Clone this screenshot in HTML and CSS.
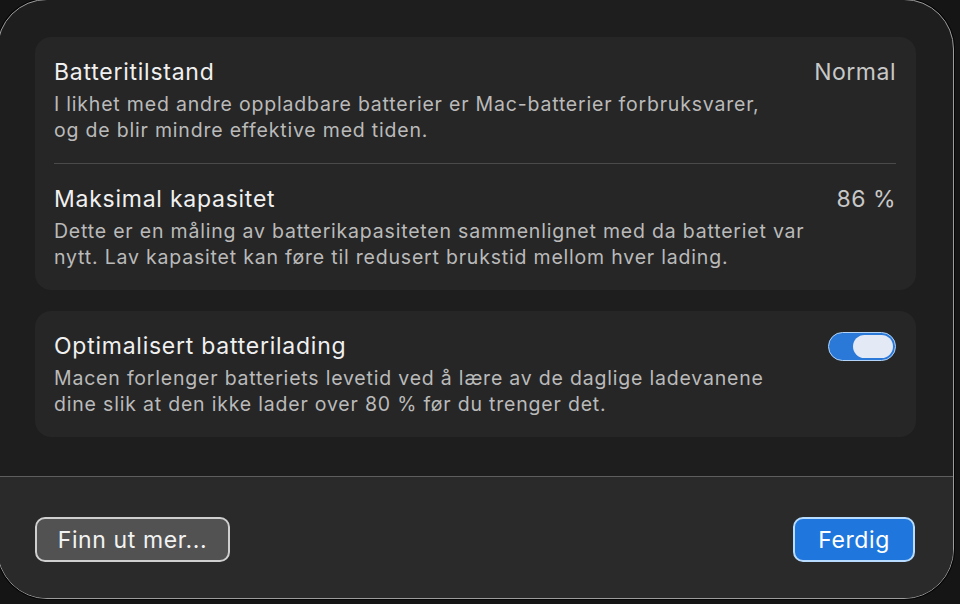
FILE: index.html
```html
<!DOCTYPE html>
<html lang="nb">
<head>
<meta charset="utf-8">
<title>Batteritilstand</title>
<link rel="stylesheet" href="styles.css">
</head>
<body>
<div class="window">
  <div class="content">
    <section class="card">
      <div class="row">
        <div class="row-head">
          <span class="title">Batteritilstand</span>
          <span class="value">Normal</span>
        </div>
        <p class="desc">I likhet med andre oppladbare batterier er Mac-batterier forbruksvarer,<br>og de blir mindre effektive med tiden.</p>
      </div>
      <div class="sep"></div>
      <div class="row">
        <div class="row-head">
          <span class="title">Maksimal kapasitet</span>
          <span class="value">86 %</span>
        </div>
        <p class="desc">Dette er en måling av batterikapasiteten sammenlignet med da batteriet var<br>nytt. Lav kapasitet kan føre til redusert brukstid mellom hver lading.</p>
      </div>
    </section>
    <section class="card">
      <div class="row">
        <div class="row-head">
          <span class="title">Optimalisert batterilading</span>
          <span class="toggle"><span class="knob"></span></span>
        </div>
        <p class="desc">Macen forlenger batteriets levetid ved å lære av de daglige ladevanene<br>dine slik at den ikke lader over 80 % før du trenger det.</p>
      </div>
    </section>
  </div>
  <div class="footer">
    <button class="btn btn-secondary">Finn ut mer...</button>
    <button class="btn btn-primary">Ferdig</button>
  </div>
</div>
</body>
</html>
```

FILE: styles.css
```css
html, body {
  margin: 0;
  padding: 0;
}
body {
  background: #151515;
  width: 960px;
  height: 604px;
  overflow: hidden;
  font-family: "Inter", "Noto Sans", "Liberation Sans", sans-serif;
  -webkit-font-smoothing: antialiased;
}
.window {
  box-sizing: border-box;
  width: 957px;
  height: 600px;
  margin: -1px 0 0 -3px;
  border: 1px solid #9c9c9c;
  border-radius: 50px;
  box-shadow: 0 0 0 1px #050505;
  background: #1e1e1e;
  overflow: hidden;
  display: flex;
  flex-direction: column;
}
.content {
  flex: 1;
  padding: 37px 37px 0 37px;
  display: flex;
  flex-direction: column;
  gap: 21px;
}
.card {
  background: #262626;
  border-radius: 16px;
  display: flex;
  flex-direction: column;
}
.row {
  padding: 21px 20px 20px 19px;
}
.row-head {
  display: flex;
  justify-content: space-between;
  align-items: flex-start;
  height: 28px;
}
.title {
  font-size: 23px;
  line-height: 28px;
  letter-spacing: 0.75px;
  color: #f0f0f0;
  font-weight: 400;
}
.value {
  font-size: 23px;
  line-height: 28px;
  letter-spacing: 0.5px;
  color: #c8c8c8;
}
.desc {
  margin: 5px 0 0 0;
  font-size: 19.5px;
  line-height: 26px;
  letter-spacing: 0.8px;
  color: #bababa;
}
.sep {
  height: 1px;
  background: #4a4a4a;
  margin: 0 20px 0 19px;
}
.toggle {
  box-sizing: border-box;
  width: 68px;
  height: 29px;
  border-radius: 15px;
  background: #2a78d8;
  border: 1.5px solid #b3d4f7;
  display: flex;
  justify-content: flex-end;
  align-items: center;
  padding-right: 2px;
}
.knob {
  width: 40px;
  height: 23px;
  border-radius: 12px;
  background: #e3e9f5;
}
.footer {
  box-sizing: border-box;
  height: 122px;
  flex: 0 0 122px;
  background: #2a2a2a;
  border-top: 1px solid #5e5e5e;
  padding: 40px 38px 0 37px;
  display: flex;
  justify-content: space-between;
  align-items: flex-start;
}
.btn {
  box-sizing: border-box;
  height: 45px;
  border-radius: 10px;
  font-family: inherit;
  font-size: 23px;
  letter-spacing: 0.6px;
  color: #f2f2f2;
  padding: 0;
  display: flex;
  align-items: center;
  justify-content: center;
}
.btn-secondary {
  width: 195px;
  background: #525252;
  border: 2px solid #cfcfcf;
}
.btn-primary {
  width: 122px;
  background: #1f77de;
  border: 2px solid #b8dcff;
  color: #ffffff;
}
```
